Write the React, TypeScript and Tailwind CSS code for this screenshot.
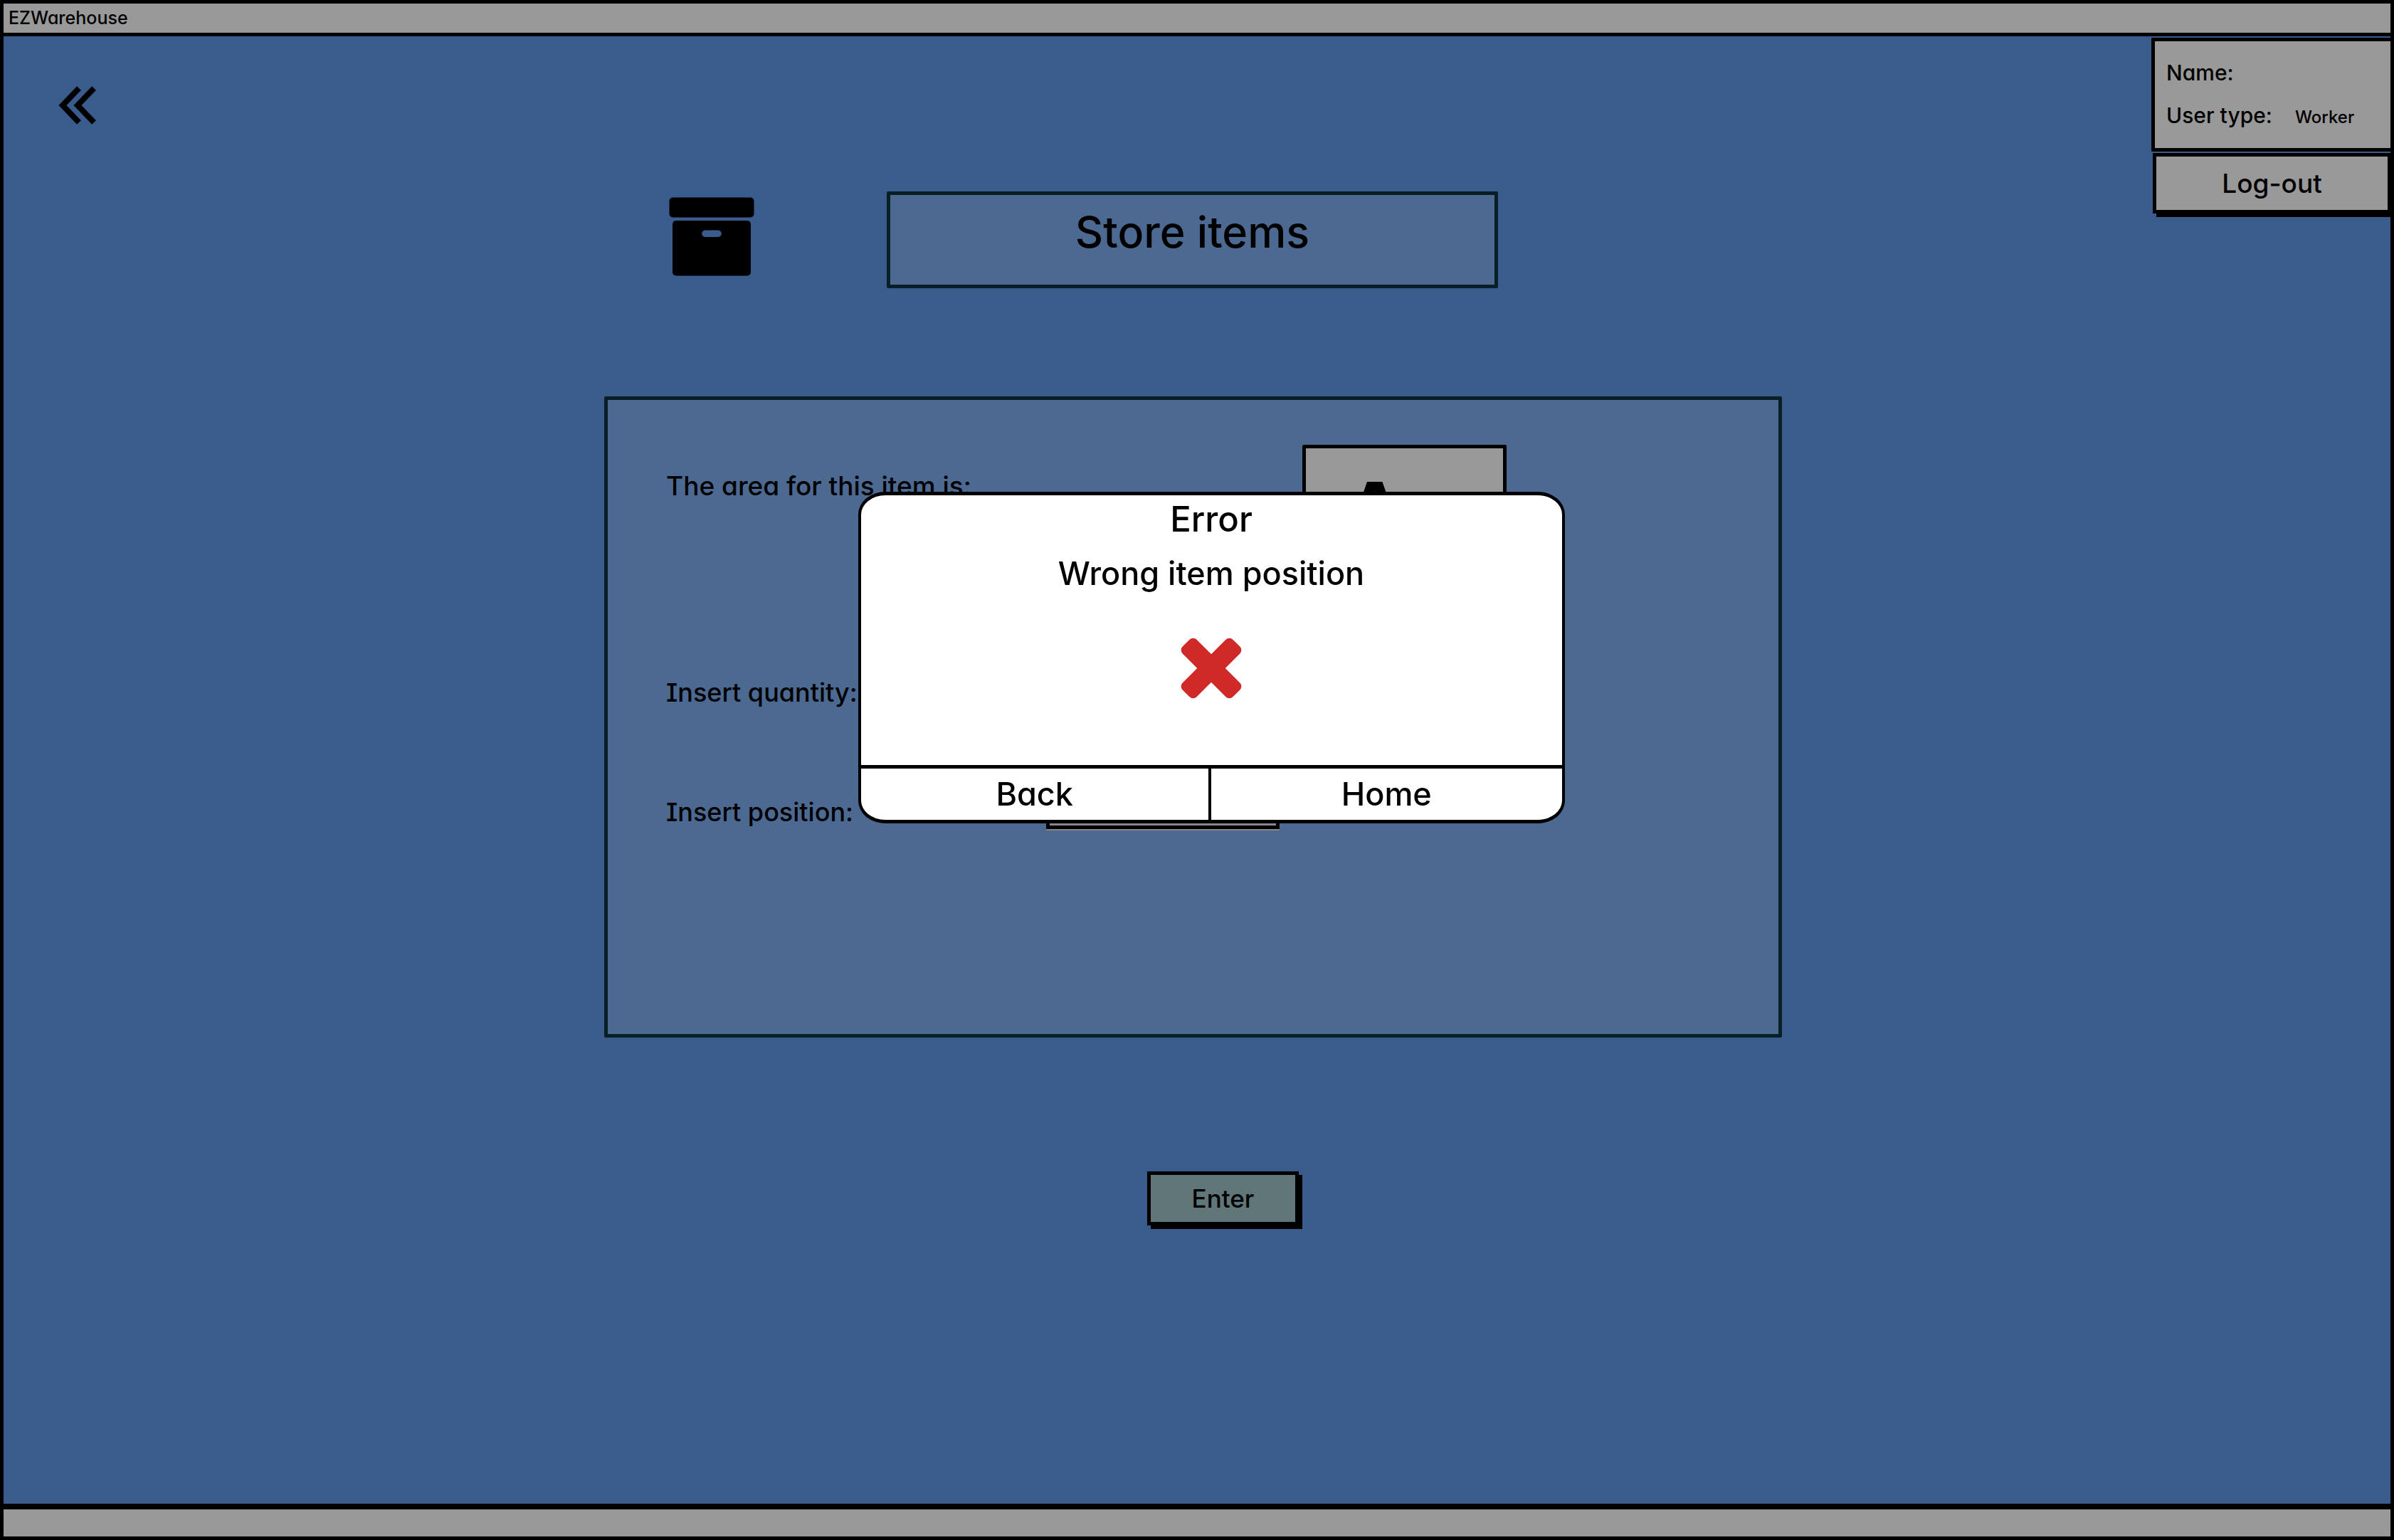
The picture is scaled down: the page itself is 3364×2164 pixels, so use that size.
import type { ReactNode } from "react";

function BackIcon() {
  return (
    <svg width="54" height="56" viewBox="0 0 54 56" fill="none" stroke="#000" strokeWidth="8" aria-hidden="true">
      <path d="M29 4 L6 28 L29 52" />
      <path d="M50 4 L27 28 L50 52" />
    </svg>
  );
}

function ArchiveIcon() {
  return (
    <svg className="mt-2 shrink-0" width="120" height="111" viewBox="0 0 120 111" role="img" aria-label="Storage box">
      <rect x="0.5" y="0.5" width="119" height="28" rx="5" />
      <path
        fillRule="evenodd"
        d="M10 33h100a5 5 0 0 1 5 5v67.500a5 5 0 0 1-5 5H10a5 5 0 0 1-5-5V38a5 5 0 0 1 5-5ZM51 46.500a4.800 4.800 0 0 0 0 9.600h18a4.800 4.800 0 0 0 0-9.600Z"
      />
    </svg>
  );
}

function CrossIcon() {
  return (
    <svg className="mx-auto mt-12" width="86" height="86" viewBox="-43 -43 86 86" fill="#cf2a27" role="img" aria-label="Error">
      <rect x="-50" y="-14" width="100" height="28" rx="7" transform="rotate(45)" />
      <rect x="-50" y="-14" width="100" height="28" rx="7" transform="rotate(-45)" />
    </svg>
  );
}

function Field({ id, children }: { id: string; children: ReactNode }) {
  return (
    <div className="flex items-start">
      <label htmlFor={id} className="w-[534px] text-[36px] leading-[58px]">
        {children}
      </label>
      <input
        id={id}
        className="h-[53px] w-[328px] border-[5px] border-black bg-[#888888] px-3 text-[30px] outline-none shadow-[0_2px_0_#8a8683]"
      />
    </div>
  );
}

function ErrorDialog() {
  return (
    <div className="fixed inset-0 flex items-start justify-center pt-[691px] pl-10">
      <div
        role="alertdialog"
        aria-labelledby="error-title"
        aria-describedby="error-text"
        className="flex w-[993px] flex-col overflow-hidden rounded-[38px/32px] border-x-4 border-y-[5px] border-black bg-white text-center"
      >
        <h2 id="error-title" className="text-[49px] leading-[68px]">
          Error
        </h2>
        <p id="error-text" className="text-[45px] leading-[84px]">
          Wrong item position
        </p>
        <CrossIcon />
        <div className="mt-[93px] grid grid-cols-2 border-t-[5px] border-black text-[45px] leading-[72px]">
          <button type="button" className="border-r-4 border-black">
            Back
          </button>
          <button type="button">Home</button>
        </div>
      </div>
    </div>
  );
}

export default function App() {
  return (
    <div className="flex min-h-screen flex-col border-5 border-black bg-[#3a5c8c] font-['Inter',sans-serif] font-medium text-black [font-feature-settings:'cv11','cv08']">
      <header className="h-[46px] border-b-[5px] border-black bg-[#999999] px-[7px] text-[25px] leading-[40px]">
        EZWarehouse
      </header>

      <main className="grid flex-1 grid-cols-[844fr_1655fr_855fr] items-start">
        <button type="button" aria-label="Back" className="mt-[69px] ml-[77px] justify-self-start">
          <BackIcon />
        </button>

        <div className="flex flex-col pt-[218px]">
          <div className="flex items-start gap-[186px] pl-[91px]">
            <ArchiveIcon />
            <h1 className="h-[136px] w-[859px] rounded-xs border-[5px] border-[#082025] bg-[#4c6991] text-center text-[61px] leading-[104px]">
              Store items
            </h1>
          </div>

          <form id="store" className="mt-[152px] rounded-xs border-[5px] border-[#082025] bg-[#4c6991] pt-[63px] pb-[283px] pl-[82px]">
            <div className="flex items-start justify-between pr-[382px]">
              <label htmlFor="area" className="text-[37px] leading-[116px]">
                The area for this item is:
              </label>
              <output
                id="area"
                className="h-[240px] w-[287px] rounded-xs border-[5px] border-black bg-[#999999] pl-14 text-[110px] leading-[174px] font-bold"
              >
                A
              </output>
            </div>
            <div className="mt-[79px] flex flex-col gap-[110px]">
              <Field id="quantity">Insert quantity:</Field>
              <Field id="position">Insert position:</Field>
            </div>
          </form>

          <div className="mt-[188px] flex justify-center pl-[84px]">
            <button
              type="submit"
              form="store"
              className="h-[76px] w-[213px] border-[5px] border-black bg-[#617679] text-[35px] shadow-[5px_5px_0_#000]"
            >
              Enter
            </button>
          </div>
        </div>

        <aside className="mt-0.5 flex w-[336px] flex-col gap-0.5 justify-self-end">
          <dl className="h-[160px] rounded-l-xs border-y-[5px] border-l-[5px] border-black bg-[#999999] pt-[14px] pl-4 text-[30px] leading-[60px]">
            <div className="flex">
              <dt>Name:</dt>
              <dd />
            </div>
            <div className="flex items-baseline gap-8">
              <dt>User type:</dt>
              <dd className="text-[24px]">Worker</dd>
            </div>
          </dl>
          <button
            type="button"
            className="ml-0.5 h-[85px] border-[5px] border-r-4 border-black bg-[#999999] text-[37px] shadow-[5px_5px_0_#000]"
          >
            Log-out
          </button>
        </aside>
      </main>

      <footer className="h-[46px] border-t-8 border-black bg-[#999999]" />

      <ErrorDialog />
    </div>
  );
}
